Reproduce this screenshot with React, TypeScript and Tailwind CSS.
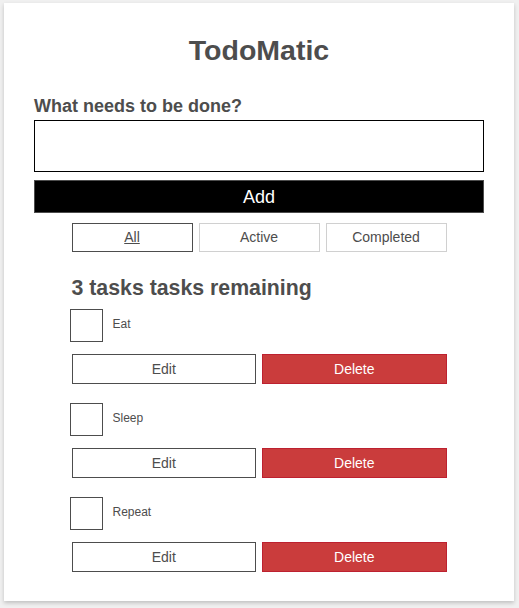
const tasks = ["Eat", "Sleep", "Repeat"];

const FilterButton = ({ name, pressed }: { name: string; pressed?: boolean }) => (
  <button
    type="button"
    className={
      pressed
        ? "flex-1 h-[29px] border border-[#4d4d4d] bg-white text-[14px] text-[#4d4d4d] underline"
        : "flex-1 h-[29px] border border-[#d0d0d0] bg-white text-[14px] text-[#4d4d4d]"
    }
  >
    {name}
  </button>
);

const Todo = ({ name }: { name: string }) => (
  <li className="flex flex-col">
    <div className="flex items-center h-[33px]">
      <div className="w-[33px] h-[33px] -ml-[2px] border border-[#4d4d4d] bg-white"></div>
      <label className="ml-[10px] text-[12px] text-[#4d4d4d] -mt-[3px]">{name}</label>
    </div>
    <div className="flex gap-[6px] mt-[12px]">
      <button
        type="button"
        className="flex-1 h-[30px] border border-[#4d4d4d] bg-white text-[14px] text-[#4d4d4d]"
      >
        Edit
      </button>
      <button
        type="button"
        className="flex-1 h-[30px] border border-[#bd2130] bg-[#ca3c3c] text-[14px] text-white"
      >
        Delete
      </button>
    </div>
  </li>
);

export default function App() {
  return (
    <div className="min-h-[608px] bg-[#f0f0f0] pt-[3px] pl-[4px] font-['Liberation_Sans',Arial,sans-serif]">
      <div className="w-[510px] bg-white shadow-[0_2px_4px_0_rgba(0,0,0,0.2)] pt-[30px] px-[30px] pb-[29px] flex flex-col">
        <h1 className="h-[34px] leading-[34px] text-center text-[28.5px] font-bold text-[#4d4d4d]">
          TodoMatic
        </h1>
        <label className="mt-[29px] h-[20px] leading-[20px] text-[18px] font-bold text-[#4d4d4d]">
          What needs to be done?
        </label>
        <input
          type="text"
          className="mt-[4px] h-[52px] border border-black bg-white outline-none"
        />
        <button
          type="button"
          className="mt-[8px] h-[33px] border border-[#4d4d4d] bg-black text-white text-[18px] leading-[30px]"
        >
          Add
        </button>
        <div className="mx-auto w-[375px] flex flex-col">
          <div className="mt-[10px] flex gap-[6px]">
            <FilterButton name="All" pressed />
            <FilterButton name="Active" />
            <FilterButton name="Completed" />
          </div>
          <h2 className="mt-[24px] h-[25px] leading-[25px] text-[21.3px] font-bold text-[#4d4d4d]">
            3 tasks tasks remaining
          </h2>
          <ul className="mt-[8px] flex flex-col gap-[19px]">
            {tasks.map((t) => (
              <Todo key={t} name={t} />
            ))}
          </ul>
        </div>
      </div>
    </div>
  );
}
